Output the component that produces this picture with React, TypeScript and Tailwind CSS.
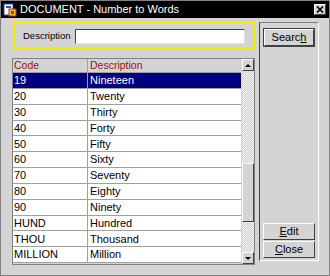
import React from 'react'

const ROWS: Array<[string, string]> = [
  ['19', 'Nineteen'],
  ['20', 'Twenty'],
  ['30', 'Thirty'],
  ['40', 'Forty'],
  ['50', 'Fifty'],
  ['60', 'Sixty'],
  ['70', 'Seventy'],
  ['80', 'Eighty'],
  ['90', 'Ninety'],
  ['HUND', 'Hundred'],
  ['THOU', 'Thousand'],
  ['MILLION', 'Million'],
]

const bevel =
  'border border-t-white border-l-white border-r-[#404040] border-b-[#404040] bg-[#d4d4d4]'

function Btn({ children, def }: { children: React.ReactNode; def?: boolean }) {
  return (
    <div className={def ? 'border border-[#404040]' : ''}>
      <button
        type="button"
        className={`${bevel} flex h-[17px] w-full items-center justify-center text-[11px] text-black`}
      >
        {children}
      </button>
    </div>
  )
}

function TitleIcon() {
  return (
    <svg viewBox="0 0 14 14" className="h-[14px] w-[14px]">
      <rect x="1" y="1" width="9" height="11" fill="#fff" stroke="#3050c0" />
      <rect x="3" y="3" width="5" height="2" fill="#3050c0" />
      <rect x="6" y="6" width="7" height="7" fill="#e8c020" stroke="#c03020" />
      <rect x="8" y="8" width="3" height="3" fill="#c03020" />
    </svg>
  )
}

export default function App() {
  return (
    <div
      className="flex h-[276px] w-[330px] flex-col border border-[#808080] bg-[#d4d4d4] text-black"
      style={{ fontFamily: '"Liberation Sans", Arial, sans-serif' }}
    >
      {/* Title bar */}
      <div className="flex h-[17px] shrink-0 items-center bg-black pl-[2px] pr-[3px]">
        <TitleIcon />
        <span className="ml-[3px] text-[11px] leading-none text-white">DOCUMENT - Number to Words</span>
        <div className={`${bevel} ml-auto flex h-[11px] w-[12px] items-center justify-center`}>
          <svg viewBox="0 0 8 7" className="h-[7px] w-[8px]">
            <path d="M1 0.5L7 6.5M7 0.5L1 6.5" stroke="#000" strokeWidth="1.6" />
          </svg>
        </div>
      </div>

      <div className="flex gap-[4px] pl-[11px] pt-[4px]">
        {/* Left column */}
        <div className="flex w-[243px] flex-col">
          <div className="ml-[1px] flex h-[28px] items-center border-2 border-[#f0f000] pl-[8px]">
            <span className="text-[9.5px]">Description</span>
            <div className="ml-[4px] h-[15px] w-[170px] border border-t-[#404040] border-l-[#404040] border-r-[#e0e0e0] border-b-[#e0e0e0] bg-white" />
          </div>

          {/* Table */}
          <div className="mt-[8px] flex h-[207px] border border-[#808080]">
            <div className="flex w-[228px] flex-col">
              <div className="flex h-[14px] shrink-0 border-b border-[#a0a0a0] text-[10.5px] leading-[13px] text-[#a01010]">
                <div className="w-[75px] border-r border-[#a0a0a0] pl-[1px]">Code</div>
                <div className="flex-1 pl-[2px]">Description</div>
              </div>
              {ROWS.map(([code, desc], i) => {
                const sel = i === 0
                return (
                  <div
                    key={code}
                    className={`flex h-[15.85px] shrink-0 items-center border-b border-[#a0a0a0] text-[11px] ${
                      sel ? 'bg-[#000080] text-white' : 'bg-white text-black'
                    }`}
                  >
                    <div className="flex h-full w-[75px] items-center border-r border-[#a0a0a0] pl-[1px]">{code}</div>
                    <div className="flex-1 pl-[2px]">{desc}</div>
                  </div>
                )
              })}
            </div>

            {/* Scrollbar */}
            <div className="ml-[1px] flex w-[12px] flex-col bg-[repeating-conic-gradient(#f4f4f4_0_25%,#d0d0d0_0_50%)] bg-[length:2px_2px]">
              <div className={`${bevel} flex h-[12px] shrink-0 items-center justify-center`}>
                <svg viewBox="0 0 6 3" className="h-[3px] w-[6px]">
                  <path d="M0 3L3 0L6 3Z" fill="#000" />
                </svg>
              </div>
              <div className="h-[92px] shrink-0" />
              <div className={`${bevel} h-[59px] shrink-0 bg-[#c8c8d0]`} />
              <div className="flex-1" />
              <div className={`${bevel} flex h-[12px] shrink-0 items-center justify-center`}>
                <svg viewBox="0 0 6 3" className="h-[3px] w-[6px]">
                  <path d="M0 0L3 3L6 0Z" fill="#000" />
                </svg>
              </div>
            </div>
          </div>
        </div>

        {/* Right button panel */}
        <div className="flex h-[239px] w-[60px] flex-col border border-l-[#404040] border-t-[#808080] border-r-white border-b-white px-[3px] pt-[5px] pb-[2px]">
          <Btn def>
            Searc<span className="underline">h</span>
          </Btn>
          <div className="mt-auto flex flex-col gap-[1px]">
            <Btn>
              <span className="underline">E</span>dit
            </Btn>
            <Btn>
              <span className="underline">C</span>lose
            </Btn>
          </div>
        </div>
      </div>
    </div>
  )
}
